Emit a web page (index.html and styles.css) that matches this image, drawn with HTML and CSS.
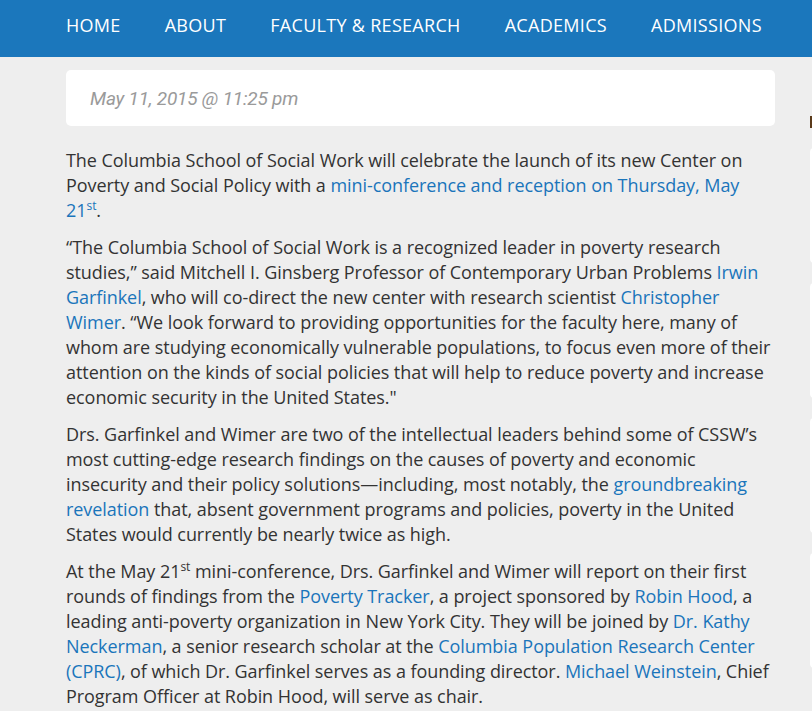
FILE: index.html
```html
<!DOCTYPE html>
<html lang="en">
<head>
    <meta charset="UTF-8">
    <title>CSSW News</title>
    <link rel="stylesheet" href="styles.css">
</head>
<body>
    <nav class="topnav">
        <a href="#">Home</a>
        <a href="#">About</a>
        <a href="#">Faculty &amp; Research</a>
        <a href="#">Academics</a>
        <a href="#">Admissions</a>
    </nav>

    <div class="page">
        <main class="post">
            <div class="post-date">May 11, 2015 @ 11:25 pm</div>

            <p>The Columbia School of Social Work will celebrate the launch of its new Center on Poverty and Social Policy with a <a href="#">mini-conference and reception on Thursday, May 21<sup>st</sup></a>.</p>

            <p>“The Columbia School of Social Work is a recognized leader in poverty research studies,” said Mitchell I. Ginsberg Professor of Contemporary Urban Problems <a href="#">Irwin Garfinkel</a>, who will co-direct the new center with research scientist <a href="#">Christopher Wimer</a>. “We look forward to providing opportunities for the faculty here, many of whom are studying economically vulnerable populations, to focus even more of their attention on the kinds of social policies that will help to reduce poverty and increase economic security in the United States."</p>

            <p>Drs. Garfinkel and Wimer are two of the intellectual leaders behind some of CSSW’s most cutting-edge research findings on the causes of poverty and economic insecurity and their policy solutions—including, most notably, the <a href="#">groundbreaking revelation</a> that, absent government programs and policies, poverty in the United States would currently be nearly twice as high.</p>

            <p>At the May 21<sup>st</sup> mini-conference, Drs. Garfinkel and Wimer will report on their first rounds of findings from the <a href="#">Poverty Tracker</a>, a project sponsored by <a href="#">Robin Hood</a>, a leading anti-poverty organization in New York City. They will be joined by <a href="#">Dr. Kathy Neckerman</a>, a senior research scholar at the <a href="#">Columbia Population Research Center (CPRC)</a>, of which Dr. Garfinkel serves as a founding director. <a href="#">Michael Weinstein</a>, Chief Program Officer at Robin Hood, will serve as chair.</p>
        </main>

        <aside class="sidebar">
            <div class="side-mark"></div>
            <div class="side-card"></div>
            <div class="side-card"></div>
            <div class="side-card"></div>
            <div class="side-card"></div>
        </aside>
    </div>
</body>
</html>
```

FILE: styles.css
```css
html,
body {
    overflow: hidden;
}

body {
    margin: 0;
    background-color: #eeeeee;
    color: #333333;
    font-family: 'Open Sans', sans-serif;
}

a {
    color: #1a75bb;
    text-decoration: none;
}

/* 上のナビゲーション */
.topnav {
    background-color: #1b77bc;
    height: 49px;
    padding-bottom: 8px;
    display: flex;
    align-items: center;
    column-gap: 44px;
    padding-left: 66px;
}

.topnav a {
    color: #ffffff;
    text-transform: uppercase;
    font-size: 18px;
    letter-spacing: 0.3px;
    white-space: nowrap;
}

.page {
    display: flex;
    column-gap: 35px;
    padding-left: 66px;
    width: 1200px;
}

.post {
    width: 709px;
    flex-shrink: 0;
    padding-top: 13px;
}

.post-date {
    background-color: #ffffff;
    border-radius: 5px;
    height: 56px;
    display: flex;
    align-items: center;
    padding-left: 24px;
    margin-bottom: 22px;
    font-family: Roboto, sans-serif;
    font-style: italic;
    font-size: 19px;
    letter-spacing: -0.2px;
    color: #9a9a9a;
}

.post p {
    margin: 0 0 12px;
    font-size: 18px;
    line-height: 25px;
    letter-spacing: -0.06px;
}

.post sup {
    font-size: 12px;
    line-height: 0;
}

/* 右の切れたサイドバー */
.sidebar {
    width: 300px;
    flex-shrink: 0;
    padding-top: 59px;
}

.side-mark {
    width: 3px;
    height: 12px;
    background-color: #5a3a1a;
    margin-bottom: 20px;
}

.side-card {
    background-color: #ffffff;
    border-radius: 4px;
    height: 115px;
    margin-bottom: 20px;
}
```
